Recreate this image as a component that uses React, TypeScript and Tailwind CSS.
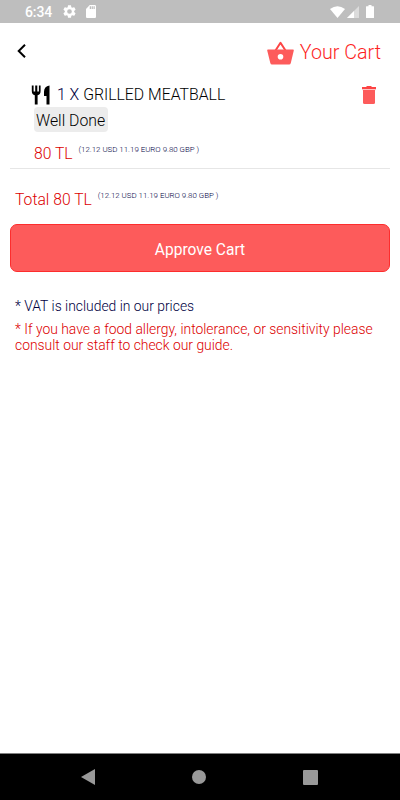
const PRICE_NOTE = "(12.12 USD 11.19 EURO 9.80 GBP )";

function StatusBar() {
  return (
    <div className="flex h-[23px] items-center bg-[#bebebe] pl-[25px] pr-[25px] text-white">
      <span className="mt-px text-[14px] leading-none font-medium tracking-[-0.1px]">6:34</span>
      <svg viewBox="2 2 20 20" className="ml-[11px] size-[13px] fill-white">
        <path d="M19.14 12.94c.04-.3.06-.61.06-.94s-.02-.64-.07-.94l2.03-1.58c.18-.14.23-.41.12-.61l-1.92-3.32c-.12-.22-.37-.29-.59-.22l-2.39.96c-.5-.38-1.03-.7-1.62-.94l-.36-2.54c-.04-.24-.24-.41-.48-.41h-3.84c-.24 0-.43.17-.47.41l-.36 2.54c-.59.24-1.13.57-1.62.94l-2.39-.96c-.22-.08-.47 0-.59.22L2.74 8.87c-.12.21-.08.47.12.61l2.03 1.58c-.05.3-.09.63-.09.94s.02.64.07.94l-2.03 1.58c-.18.14-.23.41-.12.61l1.92 3.32c.12.22.37.29.59.22l2.39-.96c.5.38 1.03.7 1.62.94l.36 2.54c.05.24.24.41.48.41h3.84c.24 0 .44-.17.47-.41l.36-2.54c.59-.24 1.13-.56 1.62-.94l2.39.96c.22.08.47 0 .59-.22l1.92-3.32c.12-.22.07-.47-.12-.61zM12 15.6A3.6 3.6 0 1 1 12 8.400a3.6 3.6 0 0 1 0 7.200z" />
      </svg>
      <svg viewBox="4 2 16 20" className="ml-[10px] h-[13px] w-[10px] fill-white" preserveAspectRatio="none">
        <path d="M18 2h-8L4 8v12c0 1.100.9 2 2 2h12c1.100 0 2-.9 2-2V4c0-1.100-.9-2-2-2zm-6 6h-2V4h2v4zm3 0h-2V4h2v4zm3 0h-2V4h2v4z" />
      </svg>
      <svg viewBox="0 0 15 12" className="ml-auto h-3 w-[15px] fill-white">
        <path d="M0 3Q7.500-2.500 15 3L7.500 12Z" />
      </svg>
      <svg viewBox="0 0 12 12" className="ml-[2px] size-3">
        <path d="M12 0V12H0Z" fill="#dcdcdc" />
        <path d="M7 5V12H0Z" fill="white" />
      </svg>
      <svg viewBox="0 0 8 13" className="ml-[7px] mr-[1px] h-[13px] w-[8px] fill-white">
        <path d="M2.500 0h3v1.300H7.500q.5 0 .5.500V12.500q0 .5-.5.500H.5Q0 13 0 12.500V1.800q0-.5.5-.5h2z" />
      </svg>
    </div>
  );
}

function Header() {
  return (
    <header className="flex h-[59px] items-center justify-between pl-[17px] pr-[19px]">
      <svg viewBox="0 0 9 14" className="h-[14px] w-[9px] -mt-[3px] fill-none stroke-black stroke-2">
        <path d="M8 .7 1.700 7 8 13.300" />
      </svg>
      <div className="flex items-center text-[#fd1f1f]">
        <svg viewBox="0 0 27 24" className="mr-[6px] h-6 w-[27px]">
          <path d="M8.500 9.500 13.500 1.800 18.500 9.500" fill="none" stroke="#fd4444" strokeWidth="2" strokeLinejoin="round" />
          <path
            fill="#fd5b5b"
            fillRule="evenodd"
            d="M1 8.500h25q1 0 .8 1L23.800 22q-.4 1.500-1.700 1.500H5Q3.700 23.500 3.300 22L.2 9.500q-.2-1 .8-1zM13.500 13a2.800 2.800 0 1 0 0 5.600 2.800 2.800 0 0 0 0-5.600z"
          />
        </svg>
        <h1 className="text-[19.700px] leading-6 font-[350]">Your Cart</h1>
      </div>
    </header>
  );
}

function CartItem() {
  return (
    <section className="mx-[10px] h-[87px] border-b border-[#e6e6e6]">
      <div className="flex h-[25px] items-center pl-[21px] pr-[14px]">
        <svg viewBox="0 0 20 20" className="h-5 w-5 fill-black">
          <path d="M.8.5v5.500c0 2.500 1.200 3.800 3 4.200V19.500h2.800V10.200c1.800-.4 3-1.700 3-4.200V.5H7.900v6H6.300v-6H4.200v6H2.600v-6zM18.500.5c-3.700.5-5.500 2.800-5.500 6.300V11h2.500v8.500h3z" />
        </svg>
        <p className="mt-px ml-[6px] text-[15.800px] leading-5 font-[350] text-black">
          <span className="text-[#00003f]">1 X </span>GRILLED MEATBALL
        </p>
        <svg viewBox="0 0 14 18" className="ml-auto h-[18px] w-[14px]">
          <path d="M0 1h4l1-1h4l1 1h4v2H0z" fill="#fd4444" />
          <path d="M0 3h14v1.200H0z" fill="#fdc4c4" />
          <path d="M1 4h12v12.500q0 1.500-1.500 1.500h-9q-1.500 0-1.500-1.500z" fill="#fd5b5b" />
        </svg>
      </div>
      <span className="ml-[24px] flex h-[25px] w-[74px] items-center rounded-[4px] bg-[#ececec] pt-[2px] pl-[2px] text-[15.800px] font-[350] whitespace-nowrap text-black">
        Well Done
      </span>
      <div className="mt-[12px] flex pl-[24px]">
        <span className="text-[15.700px] leading-5 font-[350] text-[#dc0000]">80 TL</span>
        <span className="ml-[6px] text-[7.900px] leading-[12px] font-[350] text-[#00003f]">{PRICE_NOTE}</span>
      </div>
    </section>
  );
}

export default function App() {
  return (
    <div className="flex h-[800px] w-[400px] flex-col bg-white font-[Roboto,sans-serif]">
      <StatusBar />
      <Header />
      <main className="flex-1">
        <CartItem />
        <div className="mt-[21px] flex pl-[15px]">
          <span className="text-[15.700px] leading-5 font-[350] text-[#dc0000]">Total 80 TL</span>
          <span className="ml-[6px] text-[7.900px] leading-[12px] font-[350] text-[#00003f]">{PRICE_NOTE}</span>
        </div>
        <button className="mx-[10px] mt-[14px] flex h-12 w-[380px] items-center justify-center rounded-[7px] border border-[#fd2d2d] bg-[#fd5b5b] pt-[5px] text-[15.570px] text-white">
          Approve Cart
        </button>
        <div className="px-[15px] pt-[26px] text-[13.880px] leading-4 font-[350]">
          <p className="text-[#00003f]">* VAT is included in our prices</p>
          <p className="mt-[7px] text-[#dc0000]">
            * If you have a food allergy, intolerance, or sensitivity please consult our staff to check our guide.
          </p>
        </div>
      </main>
      <nav className="flex h-[47px] items-center justify-between border-t border-[#808080] bg-black pr-[82px] pl-[81px]">
        <svg viewBox="0 0 14 16" className="h-4 w-[14px] fill-[#999]">
          <path d="M0 8 14 0V16Z" />
        </svg>
        <span className="size-[14px] rounded-full bg-[#999]" />
        <span className="size-[15px] rounded-[1px] bg-[#999]" />
      </nav>
    </div>
  );
}
